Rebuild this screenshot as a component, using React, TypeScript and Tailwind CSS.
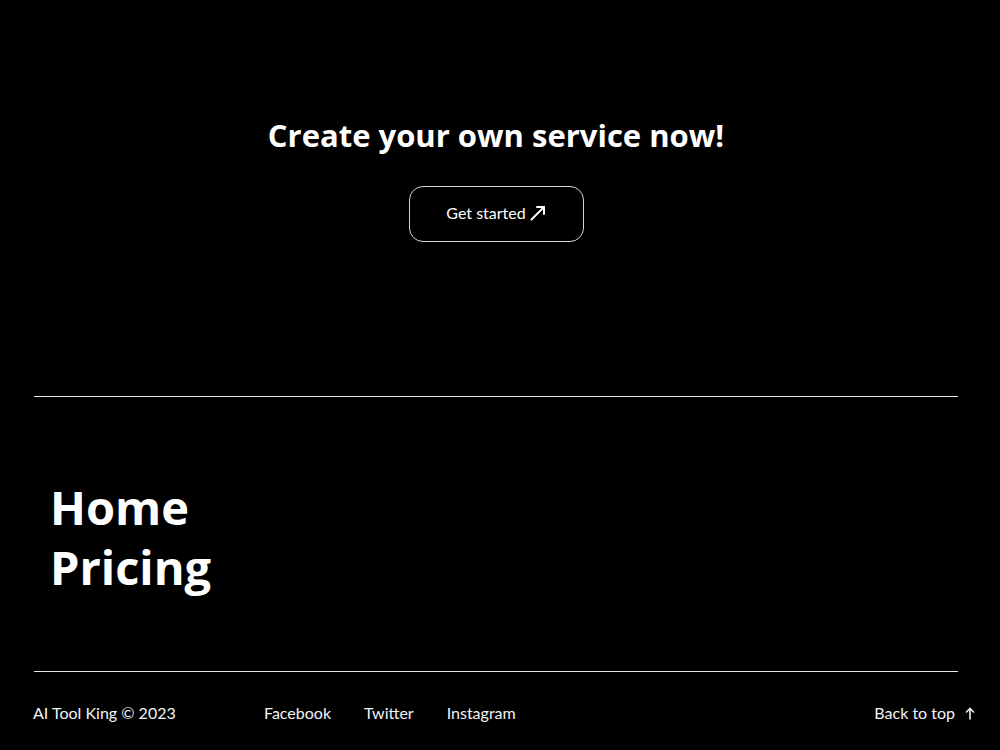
const body = { fontFamily: '"Source Sans Pro", Lato, "Noto Sans", sans-serif' }
const display = { fontFamily: '"Source Sans Pro", "Open Sans", Lato, sans-serif' }

function ArrowOut() {
  return (
    <svg width="16" height="16" viewBox="0 0 16 16" fill="none" stroke="currentColor" strokeWidth="2" strokeLinecap="round" strokeLinejoin="round">
      <path d="M1.5 14.5 14 2" />
      <path d="M7 2h7v7" />
    </svg>
  )
}

function ArrowTop() {
  return (
    <svg width="10" height="13" viewBox="0 0 10 13" fill="none" stroke="currentColor" strokeWidth="1.6" strokeLinecap="round" strokeLinejoin="round">
      <path d="M5 12V1.5" />
      <path d="M1.5 5 5 1.5 8.5 5" />
    </svg>
  )
}

export default function App() {
  return (
    <div className="min-h-[750px] w-full bg-black text-white" style={body}>
      <div className="w-[992px]">
        <section className="flex flex-col items-center pt-[113px]">
          <h2 className="text-[31px] font-bold leading-[44px]" style={display}>
            Create your own service now!
          </h2>
          <a
            href="#"
            className="mt-[29px] flex h-[56px] w-[175px] items-center justify-center gap-[4px] rounded-[14px] border border-gray-300 pb-[2px] text-[16px]"
          >
            Get started
            <ArrowOut />
          </a>
        </section>

        <div className="mx-[34px] mt-[154px] border-t border-gray-200" />

        <nav className="flex flex-col pl-[50px] pt-[80px] text-[47px] font-bold leading-[60px]" style={display}>
          <a href="#">Home</a>
          <a href="#">Pricing</a>
        </nav>

        <div className="mx-[34px] mt-[74px] border-t border-gray-200" />

        <footer className="flex items-center pb-[30px] pl-[33px] pr-[17px] pt-[29px] text-[16px] leading-[24px] text-gray-100">
          <span className="w-[231px]">AI Tool King © 2023</span>
          <div className="flex gap-[33px]">
            <a href="#">Facebook</a>
            <a href="#">Twitter</a>
            <a href="#">Instagram</a>
          </div>
          <a href="#" className="ml-auto flex items-center gap-[10px]">
            Back to top
            <ArrowTop />
          </a>
        </footer>
      </div>
    </div>
  )
}
